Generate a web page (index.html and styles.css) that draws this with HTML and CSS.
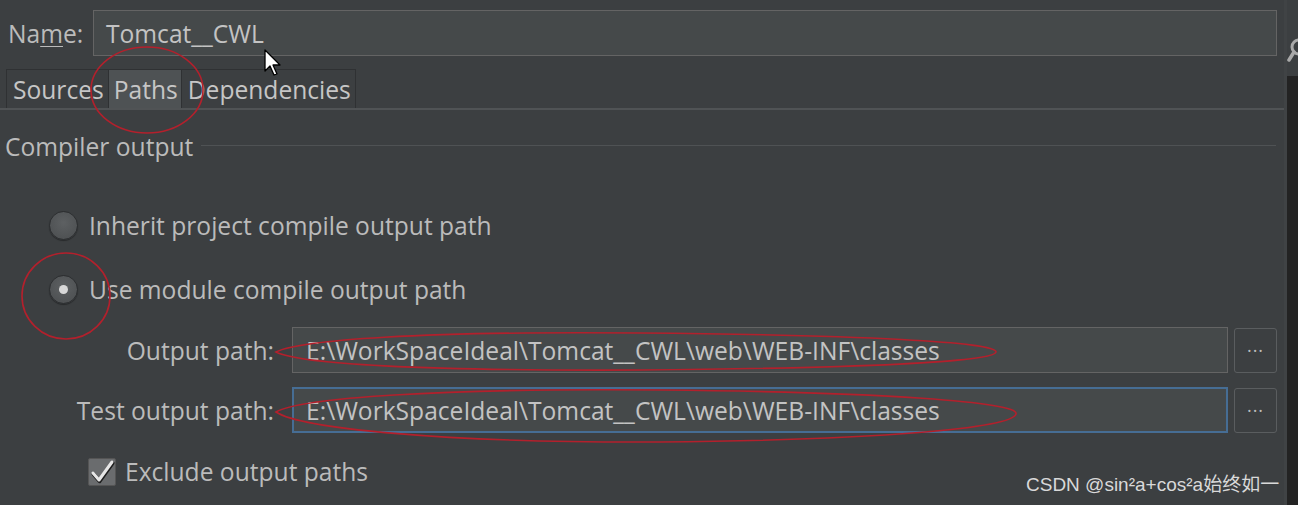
FILE: index.html
```html
<!DOCTYPE html>
<html>
<head>
<meta charset="utf-8">
<link rel="stylesheet" href="styles.css">
</head>
<body>
<div class="window">
  <div class="main">
    <div class="name-row">
      <label class="name-label">Na<u>m</u>e:</label>
      <div class="field name-field">Tomcat__CWL</div>
    </div>
    <div class="tabs">
      <div class="tab">Sources</div>
      <div class="tab active">Paths</div>
      <div class="tab">Dependencies</div>
    </div>
    <div class="group-title">
      <span>Compiler output</span>
      <div class="group-line"></div>
    </div>
    <div class="radios">
      <div class="radio-row">
        <span class="radio"></span>
        <span>Inherit project compile output path</span>
      </div>
      <div class="radio-row">
        <span class="radio checked"></span>
        <span>Use module compile output path</span>
      </div>
    </div>
    <div class="paths">
      <div class="path-row">
        <div class="path-label">Output path:</div>
        <div class="field path-field">E:\WorkSpaceIdeal\Tomcat__CWL\web\WEB-INF\classes</div>
        <div class="browse">&middot;&middot;&middot;</div>
      </div>
      <div class="path-row">
        <div class="path-label">Test output path:</div>
        <div class="field path-field focused">E:\WorkSpaceIdeal\Tomcat__CWL\web\WEB-INF\classes</div>
        <div class="browse">&middot;&middot;&middot;</div>
      </div>
    </div>
    <div class="check-row">
      <span class="checkbox">
        <svg width="30" height="30" viewBox="0 0 30 30">
          <path d="M5 16 L11 23 L24 5" fill="none" stroke="#1e1e1e" stroke-width="4" stroke-linecap="round" stroke-linejoin="round" transform="translate(0.6,1.2)"/>
          <path d="M5 16 L11 23 L24 5" fill="none" stroke="#e6e6e6" stroke-width="3" stroke-linecap="round" stroke-linejoin="round"/>
        </svg>
      </span>
      <span>Exclude output paths</span>
    </div>
  </div>
  <div class="side">
    <div class="side-top">
      <svg class="search" width="14" height="30" viewBox="0 0 14 30">
        <circle cx="12" cy="11" r="7" fill="none" stroke="#a9a9a9" stroke-width="3"/>
        <path d="M7 16 L2 24" stroke="#a9a9a9" stroke-width="3.5" stroke-linecap="round"/>
      </svg>
    </div>
  </div>

  <svg class="annot" width="1298" height="505" viewBox="0 0 1298 505">
    <g fill="none" stroke="#b3202c" stroke-width="1.6">
      <ellipse cx="147" cy="90" rx="56" ry="43"/>
      <ellipse cx="66" cy="296" rx="44" ry="43"/>
      <path d="M276 352 C 300 340, 420 331, 640 333 C 860 335, 998 342, 996 352 C 994 362, 860 368, 640 370 C 420 371, 300 364, 276 352 Z"/>
      <path d="M276 412 C 300 398, 440 388, 660 390 C 880 392, 1020 402, 1016 414 C 1012 428, 880 440, 660 442 C 440 443, 300 428, 276 412 Z"/>
    </g>
  </svg>
  <svg class="cursor" width="20" height="30" viewBox="0 0 20 30">
    <path d="M1 1 L1 22 L6 17 L10 26 L13 25 L9 16 L16 16 Z" fill="#ffffff" stroke="#000000" stroke-width="1.3" stroke-linejoin="round"/>
  </svg>
  <div class="watermark">CSDN @sin²a+cos²a始终如一</div>
</div>
</body>
</html>
```

FILE: styles.css
```css
* { box-sizing: border-box; }
html, body {
  margin: 0;
  padding: 0;
  background: #3c3f41;
  overflow: hidden;
}
.window {
  position: relative;
  width: 1298px;
  height: 505px;
  display: flex;
  font-family: "Open Sans", "Noto Sans", sans-serif;
  font-size: 24.6px;
  color: #bbbbbb;
}
.main {
  width: 1287px;
  flex: none;
  background: #3c3f41;
  border-right: 3px solid #404345;
}
.side {
  flex: 1;
  background: #232323;
}
.side-top {
  height: 76px;
  background: #3c3f41;
  padding-top: 36px;
}
.search { display: block; }

.name-row {
  display: flex;
  align-items: center;
  margin-top: 10px;
  padding-left: 8px;
  padding-right: 7px;
}
.name-label {
  width: 85px;
  flex: none;
}
.name-label u { text-decoration-thickness: 1px; text-underline-offset: 3px; }
.field {
  background: #45494a;
  border: 1px solid #646464;
  color: #c3c3c3;
  display: flex;
  align-items: center;
  white-space: nowrap;
}
.name-field {
  flex: 1;
  height: 46px;
  padding-left: 12px;
}

.tabs {
  display: flex;
  margin-top: 13px;
  padding-left: 6px;
  height: 41px;
  border-bottom: 2px solid #505355;
}
.tab {
  height: 39px;
  padding: 0 4px 0 6px;
  border: 1px solid #2f3133;
  border-bottom: none;
  display: flex;
  align-items: center;
  background: #3c3f41;
  color: #c6c6c6;
}
.tab + .tab { border-left: none; }
.tab.active {
  background: #4e5254;
  padding: 0 3px 0 5px;
}

.group-title {
  display: flex;
  align-items: center;
  margin-top: 20px;
  padding-left: 5px;
  padding-right: 8px;
  height: 32px;
}
.group-title span { flex: none; }
.group-line {
  flex: 1;
  height: 1px;
  background: #4f5254;
  margin-left: 8px;
  margin-top: -2px;
}

.radios {
  margin-top: 47px;
  padding-left: 50px;
  display: flex;
  flex-direction: column;
  gap: 32px;
}
.radio-row {
  display: flex;
  align-items: center;
  height: 32px;
  gap: 11px;
}
.radio {
  width: 29px;
  height: 29px;
  border-radius: 50%;
  background: radial-gradient(circle at 50% 40%, #5d6062, #4a4d4f);
  border: 1px solid #2b2d2f;
  box-shadow: 0 1px 1px rgba(0,0,0,0.35);
  flex: none;
  position: relative;
  margin-left: -1px;
}
.radio.checked::after {
  content: "";
  position: absolute;
  left: 9px;
  top: 9px;
  width: 9px;
  height: 9px;
  border-radius: 50%;
  background: #d8d8d8;
}

.paths {
  margin-top: 22px;
  display: flex;
  flex-direction: column;
  gap: 14px;
}
.path-row {
  display: flex;
  align-items: center;
  height: 46px;
}
.path-label {
  width: 275px;
  text-align: right;
  padding-right: 1px;
  flex: none;
  white-space: nowrap;
}
.path-field {
  margin-left: 17px;
  width: 936px;
  height: 46px;
  padding-left: 13px;
}
.path-field.focused {
  border: 2px solid #466d94;
  padding-left: 12px;
}
.browse {
  margin-left: 6px;
  width: 43px;
  height: 45px;
  border: 1px solid #5a5d5f;
  border-radius: 3px;
  display: flex;
  align-items: center;
  justify-content: center;
  color: #bbbbbb;
  font-size: 18px;
  letter-spacing: 1px;
}

.check-row {
  display: flex;
  align-items: center;
  margin-top: 22px;
  padding-left: 88px;
  gap: 9px;
}
.checkbox {
  width: 28px;
  height: 28px;
  background: #6a6c6e;
  border: 1px solid #555;
  border-radius: 2px;
  display: block;
  flex: none;
}
.checkbox svg { display: block; margin: -2px 0 0 -1px; }

.annot {
  position: absolute;
  left: 0;
  top: 0;
  pointer-events: none;
}
.cursor {
  position: absolute;
  left: 264px;
  top: 49px;
}
.watermark {
  position: absolute;
  left: 1026px;
  top: 469px;
  font-family: "Liberation Sans", "Noto Sans CJK SC", sans-serif;
  font-size: 19px;
  color: #d9d9d9;
  white-space: nowrap;
}
```
